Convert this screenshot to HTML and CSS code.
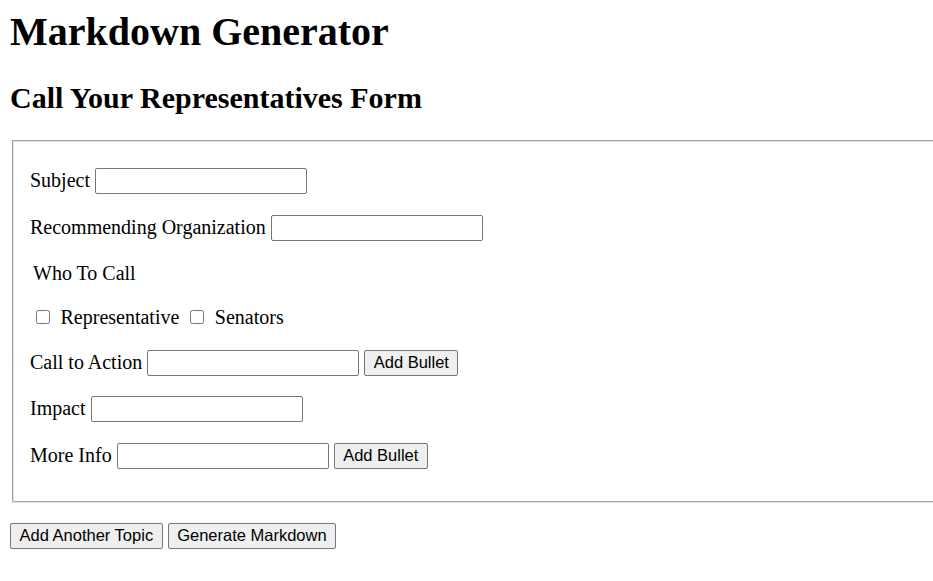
FILE: index.html
```html
<!DOCTYPE html>
<html lang="en">
<head>
<meta charset="utf-8">
<title>Markdown Generator</title>
<link rel="stylesheet" href="styles.css">
</head>
<body>
<h1 class="title">Markdown Generator</h1>
<h2 class="subtitle">Call Your Representatives Form</h2>
<form class="form">
  <fieldset class="topic">
    <p class="row"><label class="lbl" for="subject">Subject</label> <input class="field" id="subject" type="text"></p>
    <p class="row"><label class="lbl" for="org">Recommending Organization</label> <input class="field" id="org" type="text"></p>
    <p class="row who">Who To Call</p>
    <p class="row checks"><input class="check" type="checkbox" id="rep"> <label class="lbl" for="rep">Representative</label> <input class="check" type="checkbox" id="sen"> <label class="lbl" for="sen">Senators</label></p>
    <p class="row"><label class="lbl" for="cta">Call to Action</label> <input class="field" id="cta" type="text"> <button class="btn" type="button">Add Bullet</button></p>
    <p class="row"><label class="lbl" for="impact">Impact</label> <input class="field" id="impact" type="text"></p>
    <p class="row"><label class="lbl" for="more">More Info</label> <input class="field" id="more" type="text"> <button class="btn" type="button">Add Bullet</button></p>
  </fieldset>
  <div class="actions">
    <button class="btn" type="button">Add Another Topic</button>
    <button class="btn" type="button">Generate Markdown</button>
  </div>
</form>
</body>
</html>
```
FILE: styles.css
```css
html {
  overflow: hidden;
  background: #fff;
}
body {
  margin: 0;
  padding: 7.5px 10px 0 10px;
  font-family: "Liberation Serif", "Times New Roman", serif;
  font-size: 20px;
  color: #000;
}
.title {
  font-size: 40px;
  font-weight: bold;
  margin: 0 0 26.8px 0;
}
.subtitle {
  font-size: 30px;
  font-weight: bold;
  margin: 0 0 24.5px 0;
}
.form {
  margin: 0;
}
.topic {
  margin: 0 0 0 2px;
  width: 1000px;
  border: 1px solid #a0a0a0;
  border-right-color: #e3e3e3;
  border-bottom-color: #e3e3e3;
  box-shadow: inset 1px 1px 0 #e3e3e3, inset -1px -1px 0 #a0a0a0;
  padding: 7px 16px 12px 17px;
}
.row {
  margin: 20.6px 0;
}
.who {
  padding-left: 3px;
}
.checks {
  padding-top: 1px;
}
.field {
  box-sizing: border-box;
  width: 212px;
  height: 26px;
  font-family: "Liberation Sans", Arial, sans-serif;
  font-size: 16.5px;
  padding: 1px 3px;
  border: 1px solid #767676;
  border-radius: 2px;
  background: #fff;
  vertical-align: baseline;
}
.btn {
  box-sizing: border-box;
  height: 26px;
  font-family: "Liberation Sans", Arial, sans-serif;
  font-size: 16.5px;
  padding: 1px 8.5px;
  border: 1px solid #767676;
  border-radius: 2px;
  background: #efefef;
  color: #000;
}
.check {
  width: 14px;
  height: 14px;
  margin: 3px 5.5px 0 6px;
  vertical-align: baseline;
}
.actions {
  margin-top: 20px;
}
```
